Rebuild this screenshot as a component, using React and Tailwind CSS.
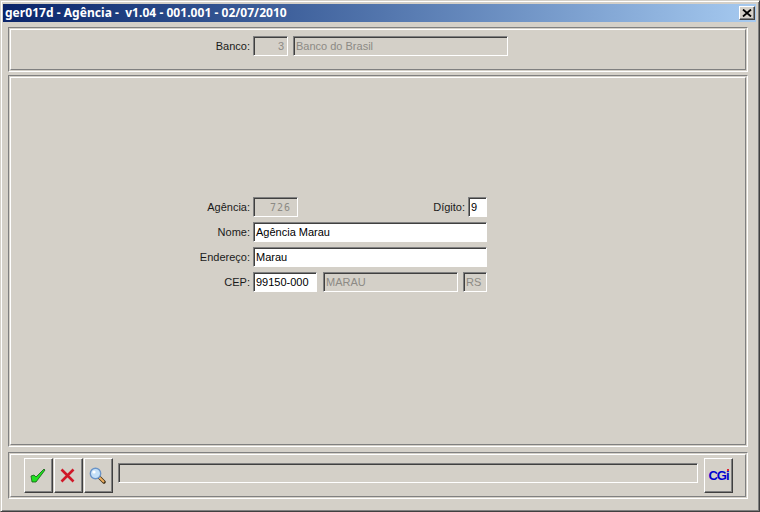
const sunken = 'border border-t-[#808080] border-l-[#808080] border-r-white border-b-white shadow-[inset_1px_1px_0_#404040]';
const raised = 'border border-t-white border-l-white border-r-[#404040] border-b-[#404040] shadow-[inset_-1px_-1px_0_#808080]';

function Groove({ className = '', innerClassName = '', children }) {
  return (
    <div className={`border border-t-[#808080] border-l-[#808080] border-r-white border-b-white p-px ${className}`}>
      <div className={`h-full border border-t-white border-l-white border-r-[#808080] border-b-[#808080] ${innerClassName}`}>
        {children}
      </div>
    </div>
  );
}

function Field({ value, disabled, className = '' }) {
  return (
    <div
      className={`flex h-5 items-center overflow-hidden pt-[1px] pl-[2px] text-[11px] leading-none ${sunken} ${disabled ? 'bg-[#d4d0c8] text-[#8c8a85]' : 'bg-white text-black'} ${className}`}
    >
      {value}
    </div>
  );
}

function Label({ children, className = 'w-[59px]' }) {
  return <span className={`mr-[3px] pt-[1px] text-right text-[11px] text-[#1a1a1a] ${className}`}>{children}</span>;
}

function ToolButton({ children }) {
  return (
    <button type="button" className={`flex h-[35px] w-[29px] items-center justify-center bg-[#d4d0c8] ${raised}`}>
      {children}
    </button>
  );
}

export default function App() {
  return (
    <div
      className="flex h-[512px] w-[760px] flex-col border border-t-[#d4d0c8] border-l-[#d4d0c8] border-r-[#404040] border-b-[#404040] bg-[#d4d0c8] pt-[3px] pr-[3px] pb-[12px] pl-[2px] shadow-[inset_1px_1px_0_#fff,inset_-1px_-1px_0_#808080] font-['Liberation_Sans',sans-serif]"
    >
      <div className="flex h-[18px] items-center justify-between bg-gradient-to-r from-[#0a246a] to-[#a6caf0] pr-[1px] pl-[2px]">
        <span className="font-['Noto_Sans',sans-serif] text-[12px] font-bold tracking-[0.04px] whitespace-pre text-white">
          ger017d - Agência -  v1.04 - 001.001 - 02/07/2010
        </span>
        <button type="button" className={`flex h-[14px] w-[16px] items-center justify-center bg-[#d4d0c8] ${raised}`}>
          <svg width="10" height="8" viewBox="0 0 10 8">
            <path d="M1 0.5 L9 7.5 M9 0.5 L1 7.5" stroke="#000" strokeWidth="1.8" fill="none" />
          </svg>
        </button>
      </div>

      <div className="mt-[5px] flex min-h-0 flex-1 flex-col pr-[8px] pl-[5px]">
        <Groove className="h-[45px]" innerClassName="flex items-start pt-[6px] pl-[199px]">
          <Label className="flex h-5 w-[40px] items-center justify-end">Banco:</Label>
          <Field disabled value="3" className="w-[35px] justify-end pr-[3px]" />
          <Field disabled value="Banco do Brasil" className="ml-[5px] w-[215px]" />
        </Groove>

        <Groove className="mt-[3px] h-[372px]" innerClassName="flex flex-col gap-[5px] pt-[119px] pl-[180px]">
          <div className="flex w-[296px] items-center">
            <Label>Agência:</Label>
            <Field disabled value="726" className="w-[45px] pl-[16px] font-['DejaVu_Sans_Mono',monospace] !text-[10px] tracking-[1px]" />
            <span className="mr-[3px] ml-auto pt-[1px] text-[11px] text-[#1a1a1a]">Dígito:</span>
            <Field value="9" className="w-[19px]" />
          </div>
          <div className="flex w-[296px] items-center">
            <Label>Nome:</Label>
            <Field value="Agência Marau" className="flex-1" />
          </div>
          <div className="flex w-[296px] items-center">
            <Label>Endereço:</Label>
            <Field value="Marau" className="flex-1" />
          </div>
          <div className="flex w-[296px] items-center">
            <Label>CEP:</Label>
            <Field value="99150-000" className="w-[64px]" />
            <Field disabled value="MARAU" className="ml-[6px] w-[135px]" />
            <Field disabled value="RS" className="ml-[5px] flex-1" />
          </div>
        </Groove>

        <Groove className="mt-[5px] h-[47px]" innerClassName="flex items-start pt-[3px] pr-[12px] pl-[13px]">
          <div className="flex gap-[1px]">
            <ToolButton>
              <svg width="16" height="15" viewBox="0 0 16 15" className="-translate-x-[1px]">
                <path d="M1 8 L4 7 L6 9 L14 1 L15 2 L6 14 L2 14 Z" fill="#20e020" stroke="#145c14" strokeWidth="0.8" />
              </svg>
            </ToolButton>
            <ToolButton>
              <svg width="15" height="15" viewBox="0 0 15 15" className="-translate-x-[1px]">
                <path d="M1.5 1.5 L13.5 13.5 M13.5 1.5 L1.5 13.5" stroke="#d01828" strokeWidth="2.6" fill="none" />
              </svg>
            </ToolButton>
            <ToolButton>
              <svg width="17" height="17" viewBox="0 0 17 17" className="-translate-x-[1px]">
                <path d="M10 10 L15 15" stroke="#3a2a10" strokeWidth="3.4" strokeLinecap="round" />
                <path d="M10.5 10.5 L14.5 14.5" stroke="#f0b060" strokeWidth="2" strokeLinecap="round" />
                <circle cx="6.5" cy="6.5" r="5.2" fill="#c4e0f8" stroke="#6a94c8" strokeWidth="1.4" />
                <circle cx="5" cy="5" r="1.6" fill="#fff" />
              </svg>
            </ToolButton>
          </div>
          <div className={`mt-[5px] ml-[5px] h-5 flex-1 bg-[#d4d0c8] ${sunken}`} />
          <div className="ml-[6px]">
            <ToolButton>
              <span className="relative font-['Liberation_Sans',sans-serif] text-[13px] leading-none font-bold tracking-[-1px] text-[#0000d0]">
                CGi
                <span className="absolute top-0 right-0 h-[2px] w-[2px] bg-[#e02030]" />
              </span>
            </ToolButton>
          </div>
        </Groove>
      </div>
    </div>
  );
}
